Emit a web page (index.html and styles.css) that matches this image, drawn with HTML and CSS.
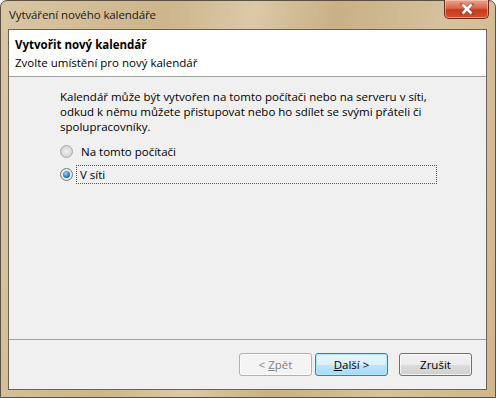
FILE: index.html
```html
<!DOCTYPE html>
<html lang="cs">
<head>
    <meta charset="UTF-8">
    <title>Vytváření nového kalendáře</title>
    <link rel="stylesheet" href="styles.css">
</head>
<body>
    <div class="window">
        <div class="titlebar">
            <span class="title">Vytváření nového kalendáře</span>
            <div class="close-btn">
                <svg width="14" height="12" viewBox="0 0 14 12">
                    <path d="M2 1 L12 11 M12 1 L2 11" stroke="#5a2a20" stroke-width="4" stroke-linecap="square" opacity="0.35"/>
                    <path d="M2.5 1.5 L11.5 10.5 M11.5 1.5 L2.5 10.5" stroke="#fff" stroke-width="2.6"/>
                </svg>
            </div>
        </div>

        <div class="client">
            <div class="header">
                <div class="header-title">Vytvořit nový kalendář</div>
                <div class="header-sub">Zvolte umístění pro nový kalendář</div>
            </div>

            <div class="content">
                <p class="intro">Kalendář může být vytvořen na tomto počítači nebo na serveru v síti, odkud k němu můžete přistupovat nebo ho sdílet se svými přáteli či spolupracovníky.</p>

                <div class="radio-row">
                    <span class="radio"></span>
                    <span class="radio-label">Na tomto počítači</span>
                </div>
                <div class="radio-row">
                    <span class="radio checked"></span>
                    <span class="radio-label focused">V síti</span>
                </div>
            </div>

            <div class="footer">
                <button class="btn disabled">&lt; <u>Z</u>pět</button>
                <button class="btn default"><u>D</u>alší &gt;</button>
                <button class="btn cancel">Zrušit</button>
            </div>
        </div>
    </div>
</body>
</html>
```

FILE: styles.css
```css
html, body {
    margin: 0;
    padding: 0;
}
body {
    width: 496px;
    height: 398px;
    overflow: hidden;
    font-family: "Open Sans", "Noto Sans", sans-serif;
    font-size: 11.5px;
    color: #000;
}

.window {
    box-sizing: border-box;
    width: 496px;
    height: 398px;
    display: flex;
    flex-direction: column;
    border: 1px solid #5c5040;
    border-radius: 7px 7px 0 0;
    background: linear-gradient(100deg, #d9c6a4 0%, #cdb58c 30%, #dcc9a8 45%, #c9b086 60%, #d6c29e 80%, #cfb68d 100%);
}

.titlebar {
    height: 28px;
    display: flex;
    justify-content: space-between;
    align-items: flex-start;
    padding-left: 8px;
    padding-right: 6px;
}
.title {
    margin-top: 6px;
    color: #1a1a1a;
    letter-spacing: -0.1px;
}
.close-btn {
    width: 45px;
    height: 19px;
    margin-top: -1px;
    display: flex;
    align-items: center;
    justify-content: center;
    box-sizing: border-box;
    border: 1px solid #6b2a1e;
    border-top: none;
    border-radius: 0 0 5px 5px;
    background: linear-gradient(#e8a590 0%, #d8664a 45%, #c63a1c 55%, #d4502e 100%);
    box-shadow: inset 0 0 0 1px rgba(255, 220, 200, 0.5);
}

.client {
    flex: 1;
    display: flex;
    flex-direction: column;
    margin: 0 8px 7px 7px;
    border: 1px solid #6d6150;
    background: #f0f0f0;
}

.header {
    height: 47px;
    box-sizing: border-box;
    padding: 6px 0 0 6px;
    background: #fff;
    border-bottom: 1px solid #a0a0a0;
    line-height: 18px;
}
.header-title {
    font-weight: bold;
}

.content {
    flex: 1;
    padding: 12px 49px 0 51px;
}
.intro {
    margin: 0 0 6px 0;
    line-height: 15px;
}

.radio-row {
    display: flex;
    align-items: center;
    height: 23px;
}
.radio {
    box-sizing: border-box;
    width: 13px;
    height: 13px;
    border-radius: 50%;
    border: 1px solid #a8a8a8;
    background: radial-gradient(circle at 50% 50%, #f2f2f2 0%, #d8d8d8 60%, #c8c8c8 100%);
    margin-right: 6px;
    flex-shrink: 0;
    position: relative;
}
.radio.checked {
    border-color: #7a7a7a;
    background: radial-gradient(circle at 50% 50%, #f4f4f4 0%, #e0e0e0 100%);
}
.radio.checked::after {
    content: "";
    position: absolute;
    left: 2px;
    top: 2px;
    width: 7px;
    height: 7px;
    border-radius: 50%;
    background: radial-gradient(circle at 40% 35%, #9ed4f4 0%, #2b7fc0 55%, #1c4f86 100%);
}
.radio-label {
    padding: 1px 2px;
}
.radio-label.focused {
    flex: 1;
    border: 1px dotted #555;
    padding: 1px 1px;
    margin-left: -3px;
    padding-left: 3px;
}

.footer {
    height: 50px;
    box-sizing: border-box;
    border-top: 1px solid #a0a0a0;
    display: flex;
    justify-content: flex-end;
    align-items: flex-start;
    padding-top: 13px;
    padding-right: 14px;
}
.btn {
    width: 73px;
    height: 23px;
    box-sizing: border-box;
    font-family: inherit;
    font-size: 11.5px;
    border-radius: 3px;
    border: 1px solid #707070;
    background: linear-gradient(#f2f2f2 0%, #ebebeb 50%, #dddddd 51%, #cfcfcf 100%);
    box-shadow: inset 0 0 0 1px rgba(255, 255, 255, 0.7);
    color: #000;
    padding: 0;
}
.btn.disabled {
    border-color: #adb2b5;
    background: #f4f4f4;
    color: #838383;
}
.btn.default {
    margin-left: 3px;
    border-color: #3c7fb1;
    background: linear-gradient(#eaf6fd 0%, #d9f0fc 50%, #bee6fd 51%, #a7d9f5 100%);
    box-shadow: inset 0 0 0 1px #ace8f8;
}
.btn.cancel {
    margin-left: 11px;
}
```
